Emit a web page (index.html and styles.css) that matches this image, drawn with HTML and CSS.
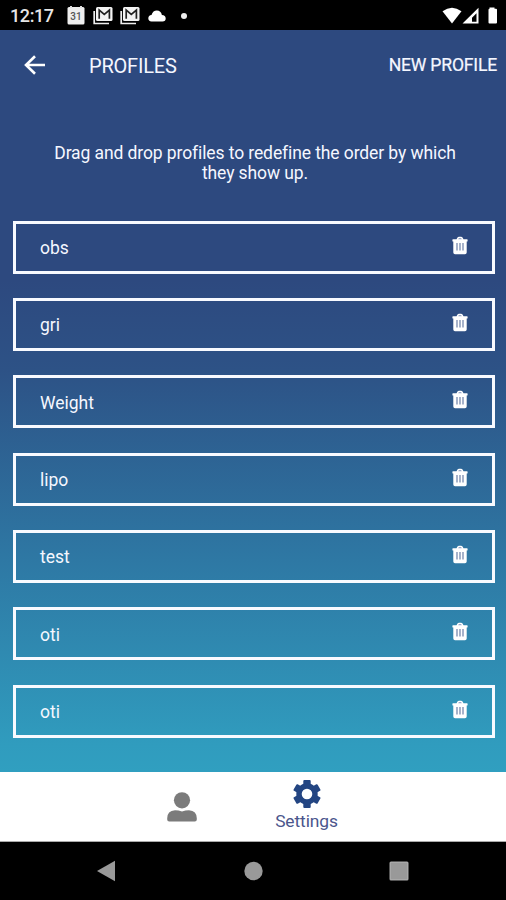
FILE: index.html
```html
<!DOCTYPE html>
<html lang="en">
<head>
<meta charset="utf-8">
<title>Profiles</title>
<link rel="stylesheet" href="styles.css">
</head>
<body>
<svg width="0" height="0" class="defs">
  <symbol id="trash" viewBox="0 0 16 19">
    <path fill="#fff" d="M1 3.200h3.500L5.500 1.500Q6 .7 7 .7h2q1 0 1.500.8l1 1.700H15q.6 0 .6.600v1.200q0 .6-.6.600h-.3V16.500q-.1 1.800-1.700 1.800H3q-1.600 0-1.700-1.800V5.600H1q-.6 0-.6-.6V3.800q0-.6.600-.6z"/>
    <path fill="#9aa9c9" d="M6.200 3.200h3.600L9.100 2H6.900z"/>
    <path stroke="#8293b5" stroke-width="1.400" d="M5 7v7.500M8 7v7.500M11 7v7.500"/>
  </symbol>
  <symbol id="mail" viewBox="0 0 20 18">
    <path d="M1.200 4v12.500H16" fill="none" stroke="#eee" stroke-width="1.700"/>
    <path fill="#f4f4f4" d="M4.500 0h13.500q1.500 0 1.500 1.500v11q0 1.500-1.500 1.500h-13.500q-1.500 0-1.500-1.500v-11Q3 0 4.500 0z"/>
    <path d="M6.200 11.800V3l5.100 4.300L16.400 3v8.800" fill="none" stroke="#222" stroke-width="1.700"/>
  </symbol>
</svg>
<div class="screen">
  <div class="status">
    <span class="time">12:17</span>
    <svg class="calendar" width="18" height="19" viewBox="0 0 18 19">
      <rect x=".5" y="1" width="17" height="17.500" rx="1.500" fill="#eee"/>
      <path d="M4 0v2M14 0v2" stroke="#ddd" stroke-width="2"/>
      <text x="9" y="14" text-anchor="middle" class="date">31</text>
    </svg>
    <svg class="mail" width="20" height="18"><use href="#mail"/></svg>
    <svg class="mail" width="20" height="18"><use href="#mail"/></svg>
    <svg class="cloud" width="18" height="12" viewBox="0 0 18 12"><path fill="#fff" d="M3.500 11.500Q.3 11.300.3 8.300.4 5.300 3.500 5 5 .6 8.800.6q4.200 0 5.100 4.500 3.700.3 3.800 3.300 0 3-3.200 3.100z"/></svg>
    <span class="dot"></span>
    <svg class="signals" width="58" height="18" viewBox="0 0 58 18">
      <path fill="#fff" d="M1.500 4.300Q11 -2.900 20.500 4.300L11 16.500z"/>
      <path fill="#fff" fill-rule="evenodd" d="M21.500 16.500L37.500 .8v15.700zM31 14.800h4.500V6.300L31 10.700z"/>
      <path fill="#fff" d="M48.500 1.800V.5h5v1.300H55q1 0 1 1v12.700q0 1-1 1h-6.500q-1 0-1-1V2.800q0-1 1-1z"/>
    </svg>
  </div>
  <main class="content">
    <header class="appbar">
      <svg class="back" width="22" height="20" viewBox="0 0 22 20"><path d="M21 10H2.500M11 1.200L2 10l9 8.800" fill="none" stroke="#fff" stroke-width="2.600"/></svg>
      <h1 class="title">PROFILES</h1>
      <span class="new">NEW PROFILE</span>
    </header>
    <p class="hint">Drag and drop profiles to redefine the order by which<br>they show up.</p>
    <div class="list">
      <div class="card"><span>obs</span><svg width="16" height="19"><use href="#trash"/></svg></div>
      <div class="card"><span>gri</span><svg width="16" height="19"><use href="#trash"/></svg></div>
      <div class="card"><span>Weight</span><svg width="16" height="19"><use href="#trash"/></svg></div>
      <div class="card"><span>lipo</span><svg width="16" height="19"><use href="#trash"/></svg></div>
      <div class="card"><span>test</span><svg width="16" height="19"><use href="#trash"/></svg></div>
      <div class="card"><span>oti</span><svg width="16" height="19"><use href="#trash"/></svg></div>
      <div class="card"><span>oti</span><svg width="16" height="19"><use href="#trash"/></svg></div>
    </div>
  </main>
  <nav class="tabs">
    <div class="tab">
      <svg class="person" width="30" height="30" viewBox="0 0 30 30"><circle cx="15" cy="8.300" r="8.100" fill="#7b7b7b"/><path fill="#7b7b7b" d="M8 18.300q3.500 0 7 1.100 3.500-1.100 7-1.100 7.800.7 7.800 8v1.200q0 2-2 2H2.200q-2 0-2-2v-1.200q0-7.300 7.800-8z"/></svg>
    </div>
    <div class="tab">
      <svg class="gear" width="28" height="28" viewBox="-14 -14 28 28">
        <circle r="8" fill="none" stroke="#234582" stroke-width="5.400"/>
        <g fill="#234582">
          <rect id="tooth" x="-3.700" y="-13.900" width="7.400" height="6" rx="1"/>
          <use href="#tooth" transform="rotate(60)"/>
          <use href="#tooth" transform="rotate(120)"/>
          <use href="#tooth" transform="rotate(180)"/>
          <use href="#tooth" transform="rotate(240)"/>
          <use href="#tooth" transform="rotate(300)"/>
        </g>
      </svg>
      <span>Settings</span>
    </div>
  </nav>
  <div class="sysnav">
    <svg width="20" height="22" viewBox="0 0 20 22"><path fill="#999" d="M1 11L19 .8v20.400z"/></svg>
    <svg width="20" height="20" viewBox="0 0 20 20"><circle cx="10.500" cy="10" r="9.200" fill="#999"/></svg>
    <svg width="20" height="20" viewBox="0 0 20 20"><rect x=".5" y=".5" width="19" height="19" rx="1.500" fill="#a8a8a8"/><rect x="2" y="2" width="16" height="16" fill="#999"/></svg>
  </div>
</div>
</body>
</html>
```
FILE: styles.css
```css
* { box-sizing: border-box; }
body { margin: 0; font-family: Roboto, "Liberation Sans", sans-serif; color: #f5f7ff; }
svg { display: block; flex: none; }
.defs { position: absolute; }
.screen { width: 506px; height: 900px; display: flex; flex-direction: column; background: #000; overflow: hidden; }
.status { height: 30px; display: flex; align-items: center; padding: 1px 7px 0 10px; }
.time { width: 57px; font-size: 18px; font-weight: 500; line-height: 20px; color: #e6e6e6; letter-spacing: -0.4px; padding-top: 1px; }
.date { font: 500 10px Roboto, sans-serif; fill: #555; }
.mail { margin-left: 8px; }
.mail + .mail { margin-left: 7px; }
.cloud { margin-left: 8px; }
.dot { width: 6px; height: 6px; border-radius: 50%; background: #eee; margin-left: 15px; }
.signals { margin-left: auto; }
.content { height: 742px; background: linear-gradient(#2d497f 0, #2d497f 250px, #2d5286 340px, #2e78a4 530px, #309cbe 715px, #309fc0 742px); }
.appbar { height: 70px; display: flex; align-items: center; padding: 0 9px 0 24px; }
.title { margin: 0 0 0 43px; font-size: 20px; font-weight: 400; line-height: 24px; letter-spacing: -0.2px; padding-top: 2px; }
.new { margin-left: auto; font-size: 17.600px; font-weight: 400; -webkit-text-stroke: 0.2px #f5f7ff; line-height: 24px; letter-spacing: -0.2px; }
.hint { margin: 43px 0 0; text-align: center; font-size: 17.500px; line-height: 20px; letter-spacing: -0.1px; padding-left: 4px; white-space: nowrap; }
.list { display: flex; flex-direction: column; gap: 24.350px; padding: 37.500px 11.500px 0 12.500px; }
.card { height: 53px; border: 3px solid #f8faff; display: flex; align-items: center; justify-content: space-between; padding: 0 23.500px 0 24.500px; font-size: 17.500px; line-height: 20px; }
.card span { padding-top: 2px; }
.card svg { margin-top: -4px; }
.tabs { height: 70px; background: #fff; display: flex; padding-left: 119px; border-bottom: 1px solid #aaa; }
.tab { width: 125px; display: flex; flex-direction: column; align-items: center; color: #4b568c; font-size: 17.400px; line-height: 20px; letter-spacing: -0.1px; }
.person { margin-top: 20px; }
.gear { margin-top: 8px; }
.tab span { margin-top: 3px; }
.sysnav { flex: 1; display: flex; align-items: center; justify-content: space-between; padding: 0 97px 0 96px; }
```
